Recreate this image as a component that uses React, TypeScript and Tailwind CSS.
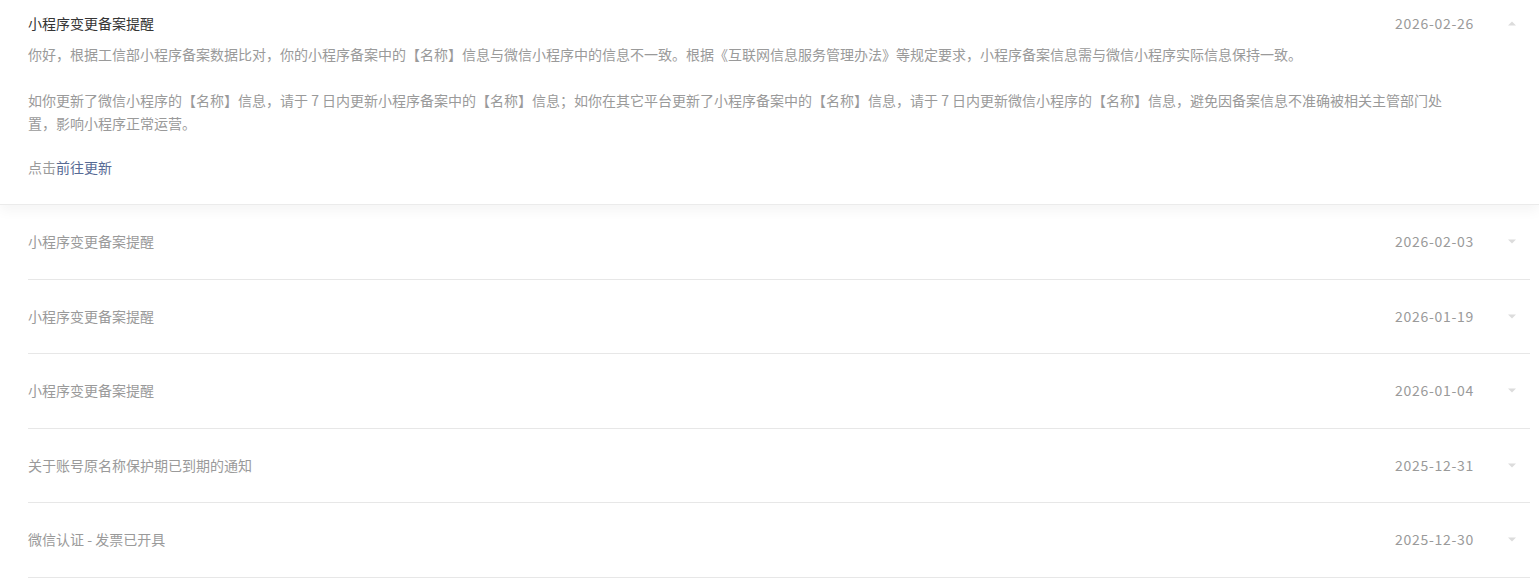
import React from "react";

const font = { fontFamily: '"Noto Sans CJK SC", "Noto Sans", sans-serif' };

function Arrow({ up }: { up?: boolean }) {
  return (
    <svg width="8" height="5" viewBox="0 0 8 5" className="shrink-0">
      {up ? <path d="M0 4.5 L4 0.5 L8 4.5 Z" fill="#dcdcdc" /> : <path d="M0 0.5 L4 4.5 L8 0.5 Z" fill="#dcdcdc" />}
    </svg>
  );
}

const rows = [
  ["小程序变更备案提醒", "2026-02-03"],
  ["小程序变更备案提醒", "2026-01-19"],
  ["小程序变更备案提醒", "2026-01-04"],
  ["关于账号原名称保护期已到期的通知", "2025-12-31"],
  ["微信认证 - 发票已开具", "2025-12-30"],
];

export default function App() {
  return (
    <div className="w-[1539px] h-[583px] overflow-hidden bg-white text-[14px]" style={font}>
      <div className="relative bg-white border-b border-[#ebebeb] shadow-[0_6px_12px_rgba(0,0,0,0.045)] pl-[28px] pr-[23px] pt-[13px] pb-[26px] h-[205px]">
        <div className="flex items-center h-[21px] leading-[21px]">
          <div className="flex-1 text-[#353535]">小程序变更备案提醒</div>
          <div className="text-[#9a9a9a] tracking-[0.7px] mr-[34px]">2026-02-26</div>
          <Arrow up />
        </div>
        <div className="mt-[9px] text-[#9a9a9a] leading-[23px] pr-[60px]">
          <p>你好，根据工信部小程序备案数据比对，你的小程序备案中的【名称】信息与微信小程序中的信息不一致。根据《互联网信息服务管理办法》等规定要求，小程序备案信息需与微信小程序实际信息保持一致。</p>
          <p className="mt-[23px] w-[1430px]">如你更新了微信小程序的【名称】信息，请于 7 日内更新小程序备案中的【名称】信息；如你在其它平台更新了小程序备案中的【名称】信息，请于 7 日内更新微信小程序的【名称】信息，避免因备案信息不准确被相关主管部门处置，影响小程序正常运营。</p>
          <p className="mt-[21px]">点击<a className="text-[#576b95]">前往更新</a></p>
        </div>
      </div>
      <div className="pl-[28px] pr-[9px]">
        {rows.map(([t, d], i) => (
          <div key={i} className="flex items-center h-[74.5px] border-b border-[#e7e7e7]">
            <div className="flex-1 text-[#9a9a9a]">{t}</div>
            <div className="text-[#9a9a9a] tracking-[0.7px] mr-[34px]">{d}</div>
            <div className="mr-[14px] flex"><Arrow /></div>
          </div>
        ))}
      </div>
    </div>
  );
}
